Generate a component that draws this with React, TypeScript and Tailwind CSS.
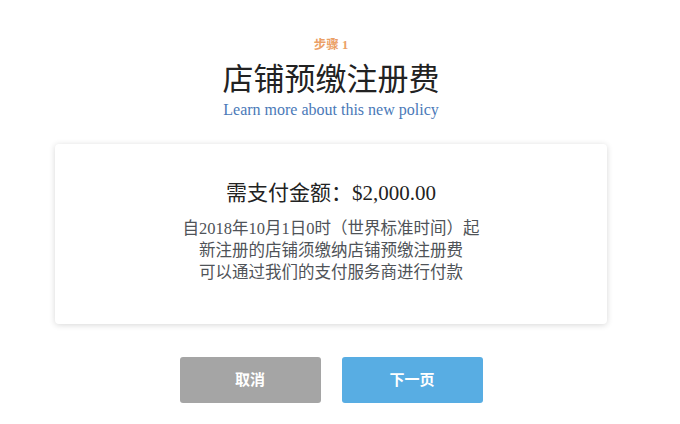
import React from 'react';

const serif = { fontFamily: '"Liberation Serif", "Noto Sans CJK SC", serif' };

const App: React.FC = () => {
  return (
    <div className="min-h-[424px] w-[680px] bg-white" style={serif}>
      <div className="flex w-[662px] flex-col items-center pt-[37px]">
        {/* Step header */}
        <div className="text-[12.5px] font-bold leading-[16px] text-[#eba066]">步骤 1</div>
        <h1 className="mt-[9px] text-[31px] leading-[36px] text-[#222]">店铺预缴注册费</h1>
        <a className="mt-[3px] text-[16px] leading-[18px] text-[#4a79b8]" href="#">
          Learn more about this new policy
        </a>

        {/* Amount card */}
        <div className="mt-[25px] flex h-[180px] w-[552px] flex-col items-center rounded-[4px] bg-white pt-[36px] shadow-[0_1px_6px_rgba(0,0,0,0.16)]">
          <div className="text-[21px] leading-[26px] text-[#222]">需支付金额：$2,000.00</div>
          <div className="mt-[12px] text-center text-[16.5px] leading-[22px] text-[#4f5358]">
            <p>自2018年10月1日0时（世界标准时间）起</p>
            <p>新注册的店铺须缴纳店铺预缴注册费</p>
            <p>可以通过我们的支付服务商进行付款</p>
          </div>
        </div>

        {/* Actions */}
        <div className="mt-[33px] flex gap-[21px]">
          <button className="h-[46px] w-[141px] rounded-[3px] bg-[#a5a5a5] text-[15px] font-bold text-white">
            取消
          </button>
          <button className="h-[46px] w-[141px] rounded-[3px] bg-[#58ade3] text-[15px] font-bold text-white">
            下一页
          </button>
        </div>
      </div>
    </div>
  );
};

export default App;
